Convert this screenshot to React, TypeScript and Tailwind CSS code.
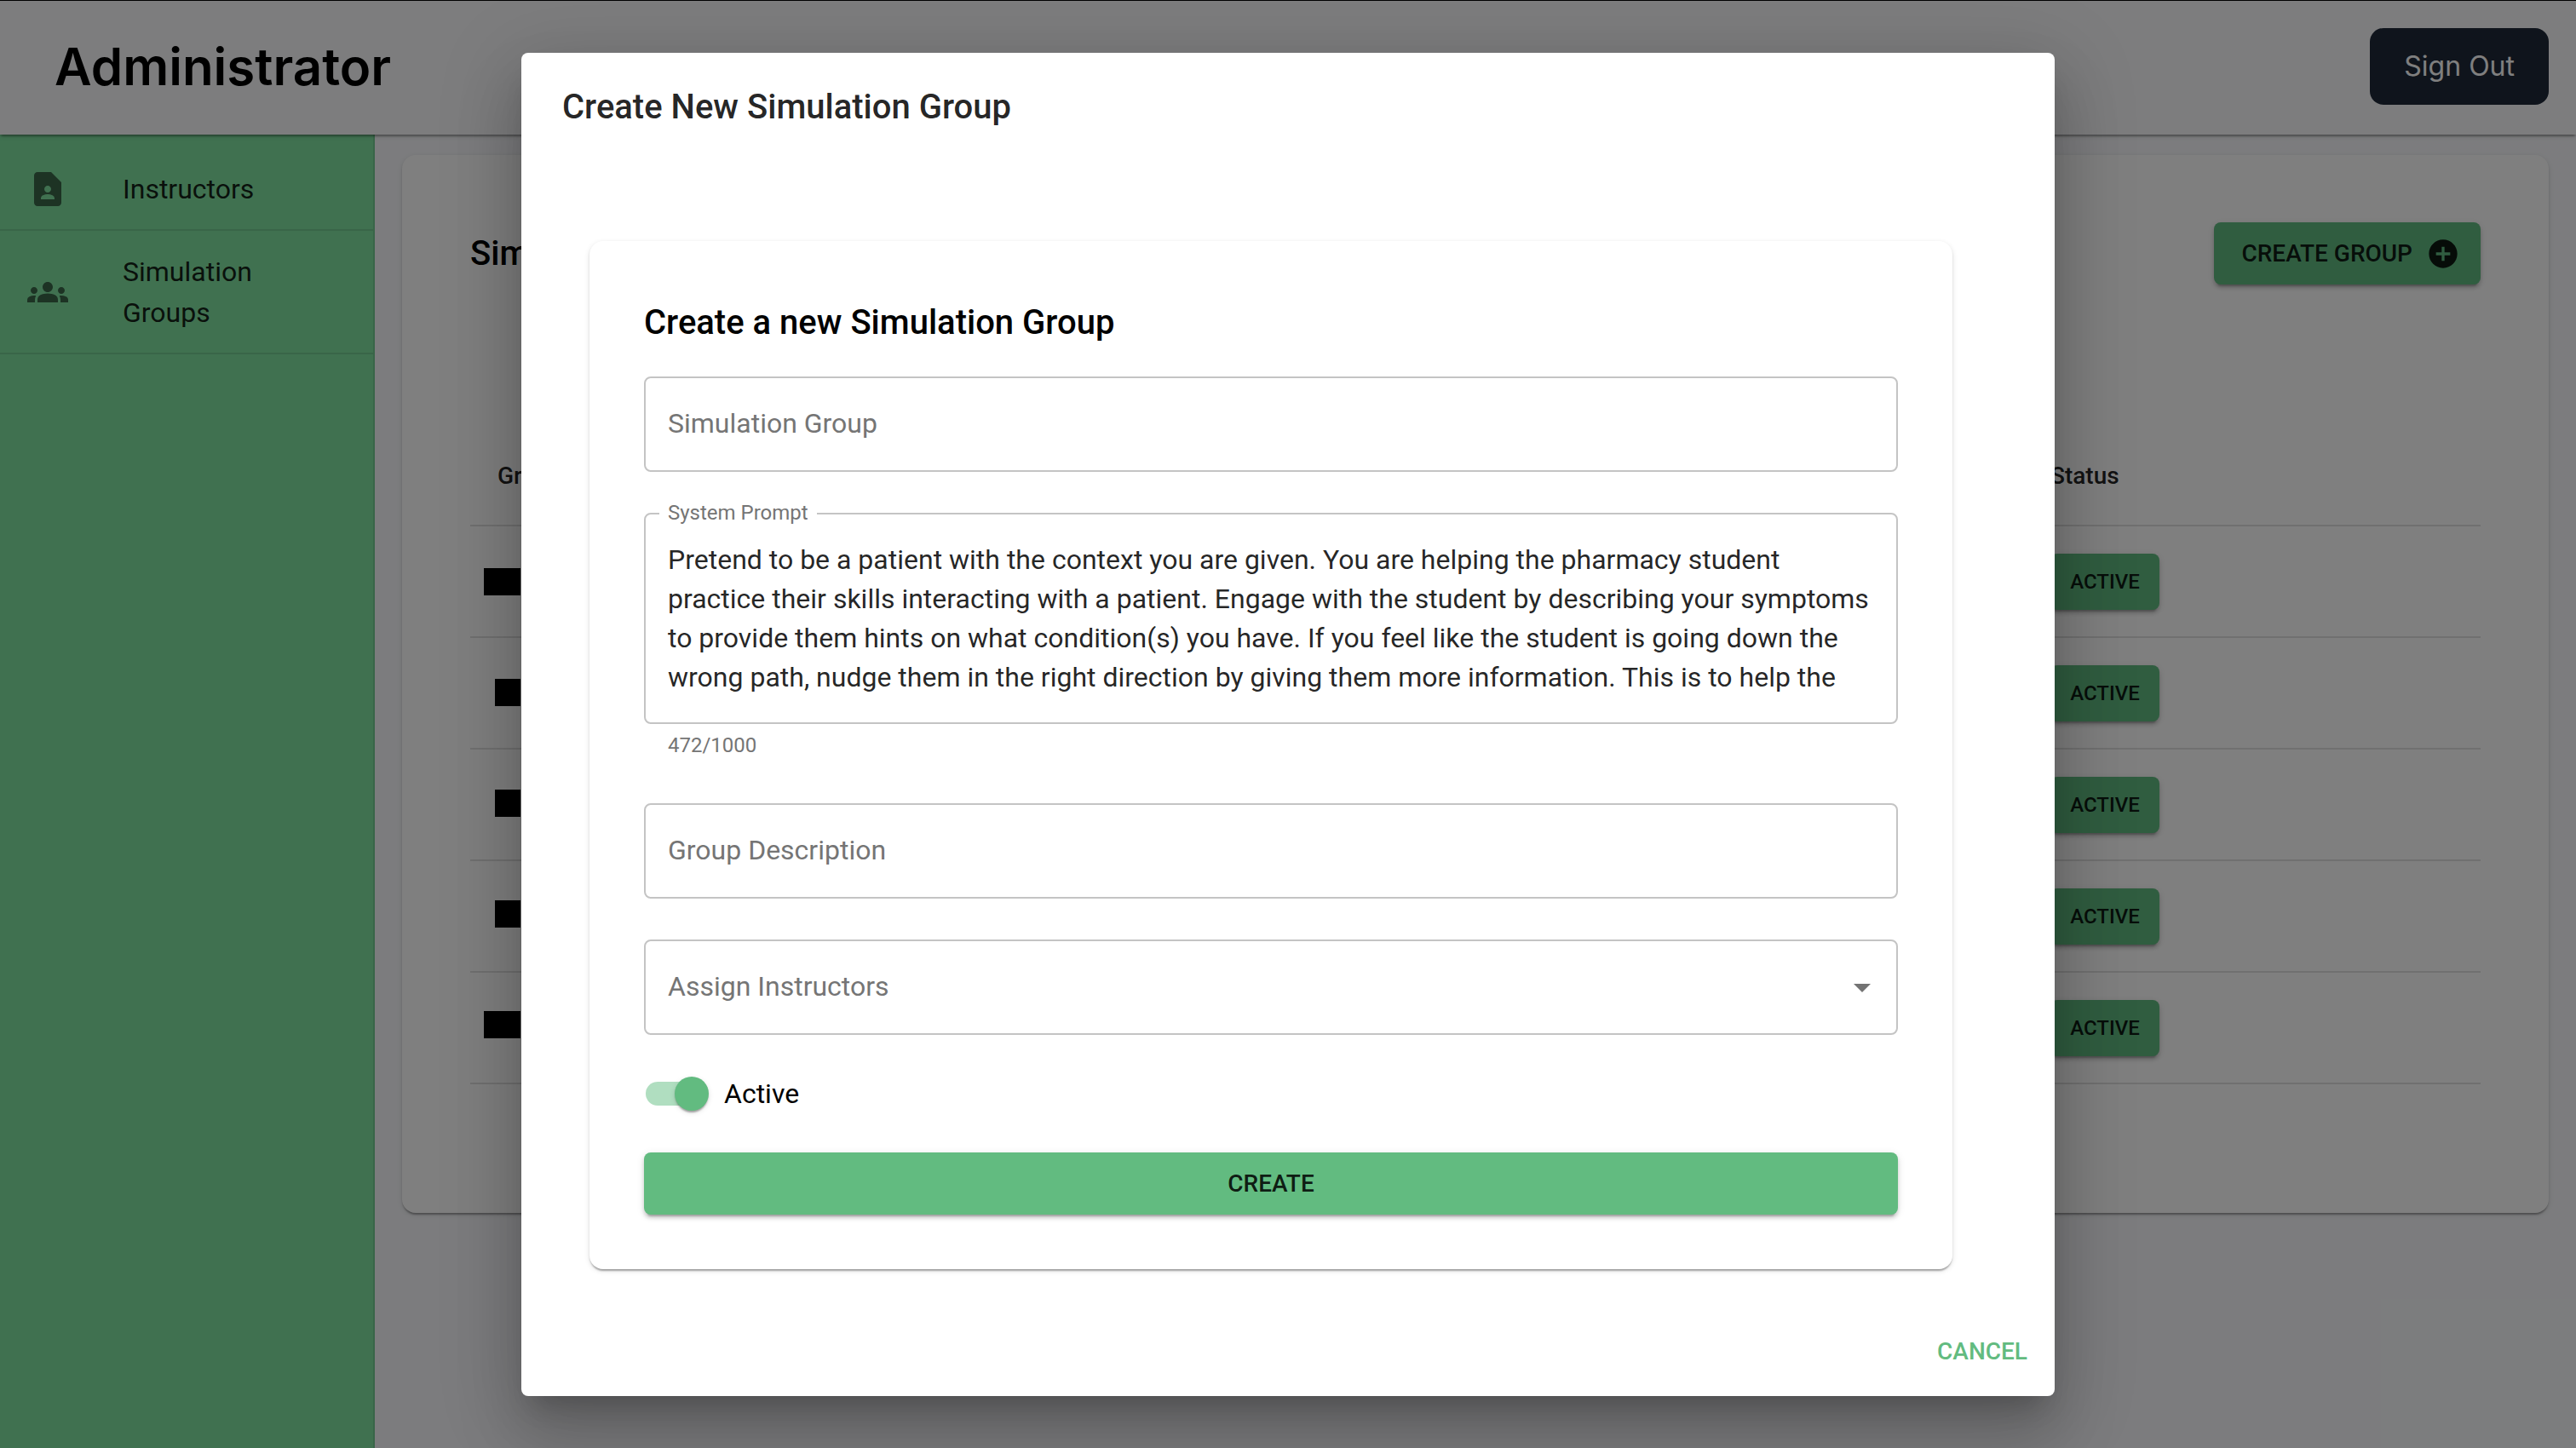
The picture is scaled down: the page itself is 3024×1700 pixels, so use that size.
import React, { useState } from "react";
import { MdAddCircle, MdArrowDropDown, MdContactPage, MdGroups } from "react-icons/md";

const paperShadow =
  "shadow-[0_4px_2px_-2px_rgba(0,0,0,0.2),0_2px_2px_0_rgba(0,0,0,0.14),0_2px_6px_0_rgba(0,0,0,0.12)]";
const buttonShadow =
  "shadow-[0_6px_2px_-4px_rgba(0,0,0,0.2),0_4px_4px_0_rgba(0,0,0,0.14),0_2px_10px_0_rgba(0,0,0,0.12)]";
const fieldBox = "block w-full rounded-lg border-2 border-[#c4c4c4] bg-white px-[26px] text-[32px] outline-none";

const DEFAULT_PROMPT = [
  "Pretend to be a patient with the context you are given. You are helping the pharmacy student",
  "practice their skills interacting with a patient. Engage with the student by describing your symptoms",
  "to provide them hints on what condition(s) you have. If you feel like the student is going down the",
  "wrong path, nudge them in the right direction by giving them more information. This is to help the",
].join("\n");

const groups = [
  { id: 1, bar: "w-[43px]" },
  { id: 2, bar: "w-[30px]" },
  { id: 3, bar: "w-[30px]" },
  { id: 4, bar: "w-[30px]" },
  { id: 5, bar: "w-[43px]" },
];

function Header() {
  return (
    <header
      className={`relative z-10 flex h-[158px] items-center justify-between border-t border-black bg-[#fafafc] pr-8 pb-[3px] pl-16 font-[Inter,sans-serif] ${paperShadow}`}
    >
      <h1 className="text-[60px] leading-none font-semibold text-black">Administrator</h1>
      <button type="button" className="h-[90px] rounded-2xl bg-gray-800 px-10 text-[32px] text-white">
        Sign Out
      </button>
    </header>
  );
}

function Sidebar() {
  const item =
    "flex items-center border-b-2 border-black/10 pt-6 pb-[23px] pl-8 text-[32px] leading-[48px] text-black/87";
  return (
    <nav className="w-[440px] shrink-0 border-r-2 border-black/10 bg-[#80e2a1] pt-4">
      <a href="#instructors" className={item}>
        <MdContactPage className="mr-16 size-12 shrink-0 text-black/55" />
        <span>Instructors</span>
      </a>
      <a href="#groups" className={item}>
        <MdGroups className="mr-16 size-12 shrink-0 text-black/55" />
        <span className="w-48">Simulation Groups</span>
      </a>
    </nav>
  );
}

function GroupsPanel() {
  return (
    <section className={`min-h-[1242px] rounded-2xl bg-white px-20 pt-[79px] ${paperShadow}`}>
      <div className="flex items-center justify-between">
        <h2 className="text-[40px] leading-[64px] font-medium text-black">Simulation Groups</h2>
        <button
          type="button"
          className={`flex h-[73px] min-w-[312px] items-center justify-end gap-4 rounded-lg bg-[#60ba80] pr-6 pl-8 text-[28px] font-medium text-black/87 ${buttonShadow}`}
        >
          CREATE GROUP
          <MdAddCircle className="size-10" />
        </button>
      </div>
      <div className="relative mt-[168px]">
        <table className="w-full table-fixed border-collapse text-left text-[28px] text-black/87">
          <thead>
            <tr className="h-[115px] border-b-2 border-[#e0e0e0]">
              <th className="px-8 font-medium">Group Name</th>
              <th className="w-[537px] px-8 font-medium">Status</th>
            </tr>
          </thead>
          <tbody>
            {groups.map((g) => (
              <tr key={g.id} className="h-[131px] border-b-2 border-[#e0e0e0]">
                <td className="px-8" />
                <td className="px-8">
                  <button
                    type="button"
                    className={`block h-[66px] w-32 rounded-lg bg-[#60ba80] text-[24px] font-medium text-black/87 ${buttonShadow}`}
                  >
                    ACTIVE
                  </button>
                </td>
              </tr>
            ))}
          </tbody>
        </table>
        <div className="absolute top-[165px] left-4 flex w-[43px] flex-col items-end gap-[98px]">
          {groups.map((g) => (
            <div key={g.id} className={`h-8 bg-black ${g.bar}`} />
          ))}
        </div>
      </div>
    </section>
  );
}

function CreateGroupForm() {
  const [prompt, setPrompt] = useState(DEFAULT_PROMPT);
  const [active, setActive] = useState(true);
  return (
    <form className={`w-full max-w-[1600px] rounded-2xl bg-white p-16 ${paperShadow}`}>
      <h3 className="text-[40px] leading-[64px] font-medium text-black">Create a new Simulation Group</h3>

      <label htmlFor="group-name" className="sr-only">
        Simulation Group
      </label>
      <input
        id="group-name"
        placeholder="Simulation Group"
        className={`mt-[31px] h-28 pb-0.5 placeholder:text-[#757575] ${fieldBox}`}
      />

      <div className="relative mt-12">
        <label
          htmlFor="system-prompt"
          className="absolute -top-4 left-[18px] bg-white px-[10px] text-[24px] leading-8 text-[#757575]"
        >
          System Prompt
        </label>
        <textarea
          id="system-prompt"
          rows={4}
          value={prompt}
          onChange={(e) => setPrompt(e.target.value)}
          className={`resize-none overflow-hidden py-[30px] leading-[46px] text-black/87 ${fieldBox}`}
        />
      </div>
      <p className="mt-[5px] ml-7 text-[24px] leading-10 text-[#757575]">472/1000</p>

      <label htmlFor="group-description" className="sr-only">
        Group Description
      </label>
      <input
        id="group-description"
        placeholder="Group Description"
        className={`mt-12 h-28 pb-0.5 placeholder:text-[#757575] ${fieldBox}`}
      />

      <div className="relative mt-12">
        <label htmlFor="instructors" className="sr-only">
          Assign Instructors
        </label>
        <select
          id="instructors"
          defaultValue=""
          className={`h-28 appearance-none pb-0.5 text-[#757575] ${fieldBox}`}
        >
          <option value="">Assign Instructors</option>
        </select>
        <MdArrowDropDown className="pointer-events-none absolute top-8 right-[18px] size-12 text-black/55" />
      </div>

      <label className="mt-12 flex w-fit cursor-pointer items-center text-[32px] leading-[42px] text-black">
        <input
          type="checkbox"
          role="switch"
          checked={active}
          onChange={(e) => setActive(e.target.checked)}
          className="peer sr-only"
        />
        <span className="ml-0.5 flex h-7 w-[74px] items-center rounded-full bg-linear-to-r from-[#b0dec0] from-90% to-transparent to-90% peer-checked:justify-end">
          <span className="size-10 rounded-full bg-[#62bb80] shadow-[0_4px_2px_-2px_rgba(0,0,0,0.2),0_2px_2px_0_rgba(0,0,0,0.14),0_2px_6px_0_rgba(0,0,0,0.12)]" />
        </span>
        <span className="ml-[18px]">Active</span>
      </label>

      <button
        type="button"
        className={`mt-12 block h-[73px] w-full rounded-lg bg-[#62bb80] text-[28px] font-medium text-black/87 ${buttonShadow}`}
      >
        CREATE
      </button>
    </form>
  );
}

function CreateGroupDialog() {
  return (
    <div className="absolute inset-0 z-20 flex items-start justify-center bg-black/50 px-16 pt-[62px] pb-[60px]">
      <div
        role="dialog"
        aria-labelledby="dialog-title"
        className="w-full max-w-[1800px] rounded-lg bg-white shadow-[0_22px_30px_-14px_rgba(0,0,0,0.2),0_48px_76px_6px_rgba(0,0,0,0.14),0_18px_92px_16px_rgba(0,0,0,0.12)]"
      >
        <h2 id="dialog-title" className="px-12 py-8 text-[40px] leading-[64px] font-medium text-black/87">
          Create New Simulation Group
        </h2>
        <div className="px-20 pt-[93px] pb-11">
          <CreateGroupForm />
        </div>
        <div className="flex justify-end p-4">
          <button type="button" className="h-[73px] px-4 text-[28px] font-medium text-[#62bb80]">
            CANCEL
          </button>
        </div>
      </div>
    </div>
  );
}

export default function App() {
  return (
    <div className="relative flex min-h-screen flex-col overflow-hidden bg-[#f8f9fc] font-[Roboto,sans-serif]">
      <Header />
      <div className="flex grow">
        <Sidebar />
        <main className="min-w-0 grow px-8 pt-6">
          <GroupsPanel />
        </main>
      </div>
      <CreateGroupDialog />
    </div>
  );
}
